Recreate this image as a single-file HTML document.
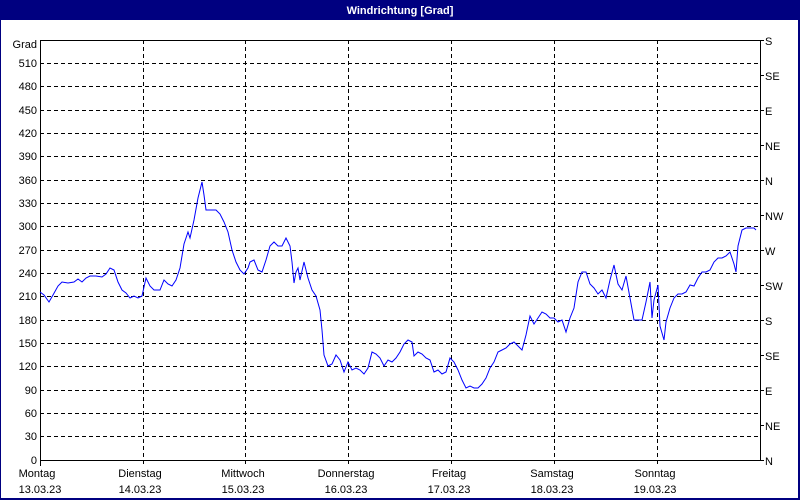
<!DOCTYPE html>
<html><head><meta charset="utf-8"><style>
html,body{margin:0;padding:0;width:800px;height:500px;overflow:hidden;background:#fff}
</style></head><body>
<svg width="800" height="500" xmlns="http://www.w3.org/2000/svg" style="display:block;font-family:'Liberation Sans',sans-serif;font-size:11px">
<rect x="0" y="0" width="800" height="500" fill="#000080"/>
<rect x="1" y="20" width="797" height="478" fill="#fff"/>
<text x="400" y="14" fill="#fff" font-weight="bold" text-anchor="middle" font-size="11">Windrichtung [Grad]</text>
<g stroke="#000" stroke-width="1" stroke-dasharray="4,3" shape-rendering="crispEdges">
<line x1="40" y1="63.5" x2="760" y2="63.5"/><line x1="40" y1="86.5" x2="760" y2="86.5"/><line x1="40" y1="110.5" x2="760" y2="110.5"/><line x1="40" y1="133.5" x2="760" y2="133.5"/><line x1="40" y1="156.5" x2="760" y2="156.5"/><line x1="40" y1="180.5" x2="760" y2="180.5"/><line x1="40" y1="203.5" x2="760" y2="203.5"/><line x1="40" y1="226.5" x2="760" y2="226.5"/><line x1="40" y1="250.5" x2="760" y2="250.5"/><line x1="40" y1="273.5" x2="760" y2="273.5"/><line x1="40" y1="296.5" x2="760" y2="296.5"/><line x1="40" y1="320.5" x2="760" y2="320.5"/><line x1="40" y1="343.5" x2="760" y2="343.5"/><line x1="40" y1="366.5" x2="760" y2="366.5"/><line x1="40" y1="390.5" x2="760" y2="390.5"/><line x1="40" y1="413.5" x2="760" y2="413.5"/><line x1="40" y1="436.5" x2="760" y2="436.5"/>
<line x1="143.5" y1="40" x2="143.5" y2="466"/><line x1="245.5" y1="40" x2="245.5" y2="466"/><line x1="348.5" y1="40" x2="348.5" y2="466"/><line x1="451.5" y1="40" x2="451.5" y2="466"/><line x1="554.5" y1="40" x2="554.5" y2="466"/><line x1="657.5" y1="40" x2="657.5" y2="466"/>
</g>
<g stroke="#000" shape-rendering="crispEdges">
<rect x="40.5" y="40.5" width="720" height="420" fill="none"/>
<line x1="40.5" y1="460" x2="40.5" y2="466"/>
<line x1="760" y1="40.5" x2="764" y2="40.5"/><line x1="760" y1="75.5" x2="764" y2="75.5"/><line x1="760" y1="110.5" x2="764" y2="110.5"/><line x1="760" y1="145.5" x2="764" y2="145.5"/><line x1="760" y1="180.5" x2="764" y2="180.5"/><line x1="760" y1="215.5" x2="764" y2="215.5"/><line x1="760" y1="250.5" x2="764" y2="250.5"/><line x1="760" y1="285.5" x2="764" y2="285.5"/><line x1="760" y1="320.5" x2="764" y2="320.5"/><line x1="760" y1="355.5" x2="764" y2="355.5"/><line x1="760" y1="390.5" x2="764" y2="390.5"/><line x1="760" y1="425.5" x2="764" y2="425.5"/><line x1="760" y1="460.5" x2="764" y2="460.5"/>
</g>
<g text-anchor="end" fill="#000">
<text x="37" y="48">Grad</text><text x="37" y="67">510</text><text x="37" y="90">480</text><text x="37" y="114">450</text><text x="37" y="137">420</text><text x="37" y="160">390</text><text x="37" y="184">360</text><text x="37" y="207">330</text><text x="37" y="230">300</text><text x="37" y="254">270</text><text x="37" y="277">240</text><text x="37" y="300">210</text><text x="37" y="324">180</text><text x="37" y="347">150</text><text x="37" y="370">120</text><text x="37" y="394">90</text><text x="37" y="417">60</text><text x="37" y="440">30</text><text x="37" y="464">0</text>
</g>
<g fill="#000">
<text x="765" y="45">S</text><text x="765" y="80">SE</text><text x="765" y="115">E</text><text x="765" y="150">NE</text><text x="765" y="185">N</text><text x="765" y="220">NW</text><text x="765" y="255">W</text><text x="765" y="290">SW</text><text x="765" y="325">S</text><text x="765" y="360">SE</text><text x="765" y="395">E</text><text x="765" y="430">NE</text><text x="765" y="465">N</text>
</g>
<g text-anchor="middle" fill="#000">
<text x="37" y="477">Montag</text><text x="40" y="493">13.03.23</text>
<text x="140" y="477">Dienstag</text><text x="140" y="493">14.03.23</text>
<text x="243" y="477">Mittwoch</text><text x="243" y="493">15.03.23</text>
<text x="346" y="477">Donnerstag</text><text x="346" y="493">16.03.23</text>
<text x="449" y="477">Freitag</text><text x="449" y="493">17.03.23</text>
<text x="552" y="477">Samstag</text><text x="552" y="493">18.03.23</text>
<text x="655" y="477">Sonntag</text><text x="655" y="493">19.03.23</text>
</g>
<polyline fill="none" stroke="#0000ff" stroke-width="1" points="40,292 44,295 49,302 53,295 58,286 62,282 68,283 74,282 78,279 82,282 86,278 90,276 96,276 102,277 106,274 110,268 114,270 118,282 122,290 126,293 130,298 134,296 138,298 142,296 146,278 150,286 154,290 160,290 164,280 168,284 172,286 176,280 180,268 184,244 188,232 190,238 194,220 198,198 202,182 204,195 206,210 210,210 216,210 220,214 224,222 228,232 232,250 236,262 240,270 244,274 248,268 250,262 254,260 258,270 262,272 266,260 270,246 274,242 278,246 282,246 286,238 290,246 292,262 294,283 296,272 298,268 300,280 304,262 308,278 312,290 316,296 320,310 322,330 324,355 328,366 332,364 336,355 340,360 344,372 348,362 352,370 356,368 360,370 364,374 368,368 372,352 376,354 380,358 384,366 388,360 392,362 396,358 400,352 404,344 408,340 412,342 414,356 418,352 422,354 426,358 430,360 434,372 438,370 442,374 446,372 450,358 454,362 458,370 462,380 466,388 470,386 474,388 478,388 482,384 486,378 490,368 494,362 498,352 502,350 506,348 510,344 514,342 518,346 522,350 526,335 530,316 534,324 538,318 542,312 546,314 550,318 554,318 558,322 562,320 566,332 570,318 574,308 578,282 582,272 586,272 590,284 594,288 598,294 602,290 606,298 610,280 614,265 618,284 622,290 626,276 630,298 634,320 638,320 642,320 646,302 650,282 652,318 654,300 658,285 660,326 664,340 666,322 670,308 674,298 678,294 682,294 686,292 690,285 694,286 698,278 702,272 706,272 710,270 714,262 718,258 722,258 726,256 730,252 734,264 736,272 738,246 742,230 746,228 750,228 754,228 756,230"/>
</svg>
</body></html>
